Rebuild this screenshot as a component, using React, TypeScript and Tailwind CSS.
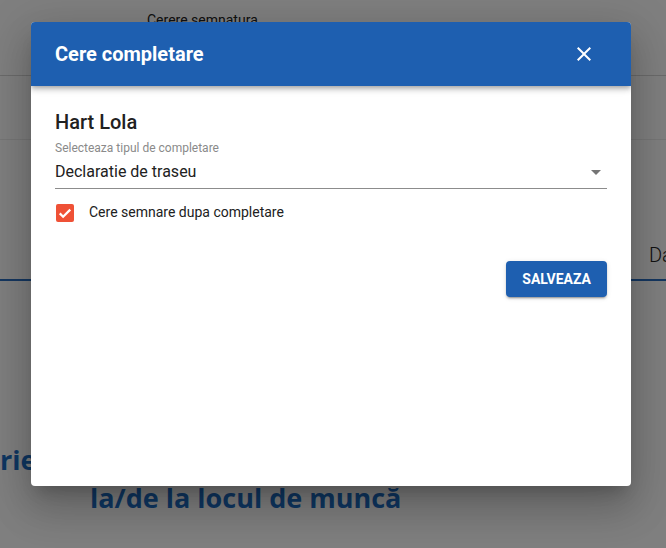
import React from "react";

function CloseIcon() {
  return (
    <svg viewBox="0 0 24 24" className="h-6 w-6 fill-white">
      <path d="M19 6.41L17.59 5 12 10.59 6.41 5 5 6.41 10.59 12 5 17.59 6.41 19 12 13.41 17.59 19 19 17.59 13.41 12z" />
    </svg>
  );
}

function ArrowDropDown() {
  return (
    <svg viewBox="0 0 24 24" className="h-6 w-6 fill-[#757575]">
      <path d="M7 10l5 5 5-5z" />
    </svg>
  );
}

function CheckBoxIcon() {
  return (
    <span className="flex h-[18px] w-[18px] items-center justify-center rounded-[2px] bg-[#ef5136]">
      <svg viewBox="0 0 24 24" className="h-[18px] w-[18px]" fill="none">
        <path d="M5 12.5l4.5 4.5L19 7.5" stroke="white" strokeWidth="3" />
      </svg>
    </span>
  );
}

function Page() {
  return (
    <div className="flex h-full flex-col bg-white font-['Roboto',sans-serif]">
      <div className="h-[76px] border-b border-[#d6d6d6] pl-[147px] pt-[10px] text-[14px] text-[#222]">
        Cerere semnatura
      </div>
      <div className="h-[64px] border-b border-[#ececec]" />
      <div className="flex h-[141px] items-end border-b-2 border-[#2a6fc0] pb-[12px] pl-[649px]">
        <span className="whitespace-nowrap text-[20px] font-light leading-[24px] text-[#222]">Da</span>
      </div>
      <div className="mt-[160px] font-['Open_Sans',sans-serif] text-[27px] font-bold leading-[38px] text-[#1f6fc5]">
        <div>rie</div>
        <div className="pl-[90px]">la/de la locul de muncă</div>
      </div>
    </div>
  );
}

export default function App() {
  return (
    <div className="relative h-[548px] w-[666px] overflow-hidden">
      <Page />
      <div className="absolute inset-0 bg-black/50 pl-[31px] pt-[22px]">
        <div className="flex h-[464px] w-[600px] flex-col overflow-hidden rounded-[4px] bg-white font-['Roboto',sans-serif] shadow-[0_11px_15px_-7px_rgba(0,0,0,0.2),0_24px_38px_3px_rgba(0,0,0,0.14),0_9px_46px_8px_rgba(0,0,0,0.12)]">
          <div className="relative z-10 flex h-[64px] shrink-0 items-center justify-between bg-[#1e5fb0] pl-[24px] pr-[35px] shadow-[0_2px_4px_-1px_rgba(0,0,0,0.2),0_4px_5px_0_rgba(0,0,0,0.14),0_1px_10px_0_rgba(0,0,0,0.12)]">
            <h2 className="text-[20px] font-bold text-white">Cere completare</h2>
            <CloseIcon />
          </div>
          <div className="flex flex-col px-[24px] pt-[23px]">
            <div className="text-[20px] font-medium leading-[26px] text-[#212121]">Hart Lola</div>
            <div className="mt-[6px] text-[12px] leading-[14px] text-[#8a8a8a]">
              Selecteaza tipul de completare
            </div>
            <div className="flex items-center justify-between border-b border-[#8c8c8c] pb-[7px] pt-[7px]">
              <span className="text-[16px] leading-[19px] text-[#212121]">Declaratie de traseu</span>
              <span className="-my-[3px] -mr-[1px]">
                <ArrowDropDown />
              </span>
            </div>
            <label className="mt-[13px] flex items-center gap-[15px] pl-px">
              <CheckBoxIcon />
              <span className="text-[14px] text-[#212121]">Cere semnare dupa completare</span>
            </label>
            <div className="mt-[38px] flex justify-end">
              <button className="h-[36px] rounded-[4px] bg-[#1e5fb0] px-[16px] text-[14px] font-bold text-white shadow-[0_3px_1px_-2px_rgba(0,0,0,0.2),0_2px_2px_0_rgba(0,0,0,0.14),0_1px_5px_0_rgba(0,0,0,0.12)]">
                SALVEAZA
              </button>
            </div>
          </div>
        </div>
      </div>
    </div>
  );
}
